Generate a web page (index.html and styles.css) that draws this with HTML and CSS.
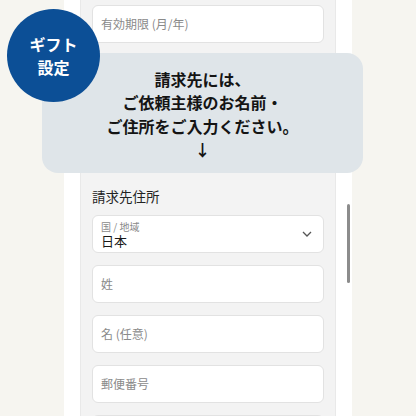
FILE: index.html
```html
<!DOCTYPE html>
<html lang="ja">
<head>
<meta charset="utf-8">
<link rel="stylesheet" href="styles.css">
</head>
<body>
<div class="stage">
  <div class="phone">
    <div class="panel">
      <div class="field"><span class="ph">有効期限 (月/年)</span></div>
      <div class="hidden-area"></div>
      <div class="section-label">請求先住所</div>
      <div class="fields">
        <div class="field select">
          <div class="sel-text">
            <span class="sel-label">国 / 地域</span>
            <span class="sel-value">日本</span>
          </div>
          <svg class="chev" width="10" height="6" viewBox="0 0 10 6"><path d="M1 1 L5 5 L9 1" fill="none" stroke="#555" stroke-width="1.3"/></svg>
        </div>
        <div class="field"><span class="ph">姓</span></div>
        <div class="field"><span class="ph">名 (任意)</span></div>
        <div class="field"><span class="ph">郵便番号</span></div>
        <div class="field"></div>
      </div>
    </div>
    <div class="scrollbar"></div>
  </div>
  <div class="bubble">
    <p>請求先には、</p>
    <p>ご依頼主様のお名前・</p>
    <p>ご住所をご入力ください。</p>
    <p>↓</p>
  </div>
  <div class="badge"><span>ギフト</span><span>設定</span></div>
</div>
</body>
</html>
```
FILE: styles.css
```css
html, body {
  margin: 0;
  padding: 0;
}
body {
  width: 416px;
  height: 416px;
  overflow: hidden;
  background: #f6f5f0;
  font-family: "Noto Sans CJK JP", "Noto Sans", sans-serif;
}
.stage {
  position: relative;
  width: 416px;
  height: 416px;
  display: flex;
  justify-content: center;
}
.phone {
  position: relative;
  width: 288px;
  height: 416px;
  background: #ffffff;
  padding: 0 16px;
  box-sizing: border-box;
}
.panel {
  height: 416px;
  background: #f3f3f3;
  border-left: 1px solid #e9e9e9;
  border-right: 1px solid #e9e9e9;
  padding: 5px 11px 0 11px;
  box-sizing: border-box;
  overflow: hidden;
}
.field {
  height: 38px;
  box-sizing: border-box;
  background: #ffffff;
  border: 1px solid #e2e2e2;
  border-radius: 6px;
  display: flex;
  align-items: center;
  padding-left: 8px;
}
.ph {
  font-size: 12px;
  color: #8a8a8a;
  line-height: 16px;
}
.hidden-area {
  height: 143px;
}
.section-label {
  height: 20px;
  line-height: 20px;
  font-size: 13.5px;
  color: #222;
  margin-bottom: 9px;
}
.fields {
  display: flex;
  flex-direction: column;
  gap: 12px;
}
.select {
  justify-content: space-between;
  padding-right: 11px;
  align-items: flex-start;
}
.sel-text {
  display: flex;
  flex-direction: column;
  padding-top: 5px;
}
.sel-label {
  font-size: 10px;
  line-height: 12px;
  color: #8a8a8a;
}
.sel-value {
  font-size: 13px;
  line-height: 16px;
  color: #1a1a1a;
}
.chev {
  margin-top: 15px;
}
.scrollbar {
  position: absolute;
  left: 283px;
  top: 204px;
  width: 3px;
  height: 79px;
  background: #8c8c8c;
  border-radius: 2px;
}
.bubble {
  position: absolute;
  left: 42px;
  top: 53px;
  width: 321px;
  height: 120px;
  background: #dfe5e9;
  border-radius: 16px;
  display: flex;
  flex-direction: column;
  align-items: center;
  justify-content: center;
  padding-top: 3px;
  box-sizing: border-box;
}
.bubble p {
  margin: 0;
  font-size: 16px;
  line-height: 23.5px;
  font-weight: 700;
  color: #141414;
}
.badge {
  position: absolute;
  left: 7px;
  top: 9px;
  width: 93px;
  height: 93px;
  border-radius: 50%;
  background: #0c4f96;
  display: flex;
  flex-direction: column;
  align-items: center;
  justify-content: center;
  color: #ffffff;
  font-weight: 700;
  font-size: 16px;
  line-height: 23px;
}
```
